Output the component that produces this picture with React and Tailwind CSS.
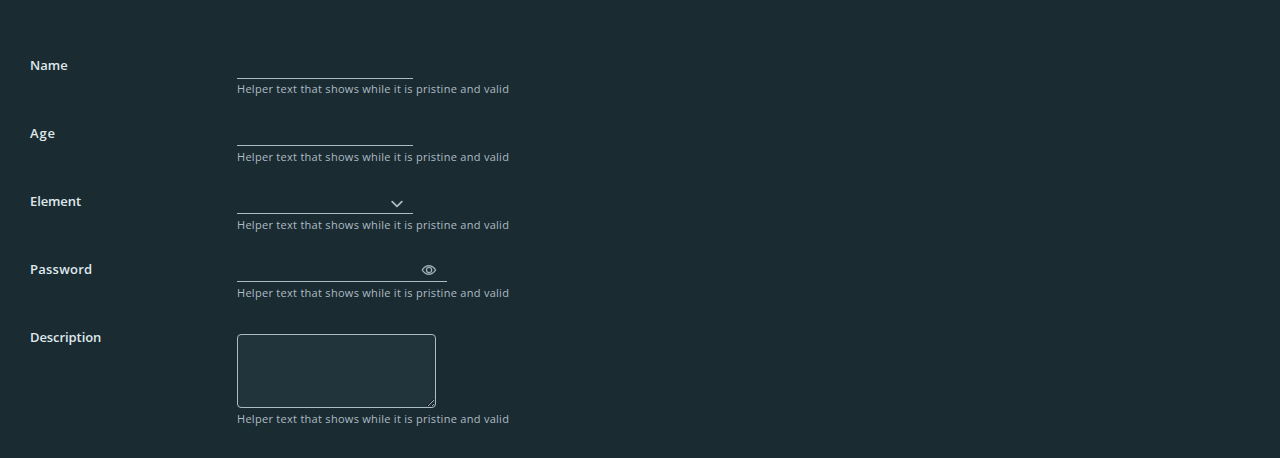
import React from "react";

const HELPER = "Helper text that shows while it is pristine and valid";

function Row({ label, id, height, line, helper, children, labelSpacing }) {
  return (
    <div className={`flex ${height}`}>
      <label
        htmlFor={id}
        className={`w-[207px] shrink-0 pt-[6px] text-[13px] leading-[18px] font-semibold text-[#dfe8ec] ${labelSpacing}`}
      >
        {label}
      </label>
      <div className="flex flex-col items-start">
        <div className={`flex ${line}`}>{children}</div>
        <span className={`whitespace-nowrap text-[11px] leading-4 tracking-[0.285px] text-[#adbbc4] ${helper}`}>
          {HELPER}
        </span>
      </div>
    </div>
  );
}

const field = "h-full min-w-0 flex-1 bg-transparent px-1.5 text-[13px] text-[#e9ecef] outline-none";

export default function App() {
  return (
    <form className="flex h-[458px] flex-col bg-[#1b2b32] pt-[50px] pl-[30px] font-['Open_Sans','Noto_Sans',sans-serif]">
      <Row label="Name" id="name" height="h-[68px]" line="h-[29px] w-[176px] border-b border-[#adbbc4]" helper="mt-[2px]" labelSpacing="tracking-[0px]">
        <input id="name" className={field} />
      </Row>
      <Row label="Age" id="age" height="h-[68px]" line="h-[28px] w-[176px] border-b border-[#adbbc4]" helper="mt-[3px]" labelSpacing="tracking-[0.9px]">
        <input id="age" className={field} />
      </Row>
      <Row label="Element" id="element" height="h-[68px]" line="h-[28px] w-[176px] border-b border-[#adbbc4]" helper="mt-[3px]" labelSpacing="tracking-[-0.1px]">
        <select id="element" className={`${field} appearance-none`}>
          <option></option>
        </select>
        <svg className="mt-[14px] mr-[10px] h-2 w-3 shrink-0" viewBox="0 0 12 8" fill="none" stroke="#adbbc4" strokeWidth="1.8" strokeLinecap="round" strokeLinejoin="round">
          <path d="M1.2 1.6 6 6.3l4.8-4.7" />
        </svg>
      </Row>
      <Row label="Password" id="password" height="h-[68px]" line="h-[28px] w-[210px] border-b border-[#adbbc4]" helper="mt-[3px]" labelSpacing="tracking-[0.25px]">
        <input id="password" type="password" className={field} />
        <svg className="mt-[8px] mr-[10px] size-4 shrink-0" viewBox="0 0 36 36" fill="#adbbc4" stroke="#adbbc4" strokeWidth="0.8">
          <path d="M33.62 17.53c-3.37-6.23-9.28-10-15.82-10S5.34 11.3 2 17.53l-.28.47.26.48c3.37 6.23 9.28 10 15.82 10s12.46-3.72 15.82-10l.26-.48Zm-15.82 8.9C12.17 26.43 7 23.29 4 18c3-5.29 8.17-8.43 13.8-8.43S28.54 12.72 31.59 18c-3.05 5.29-8.17 8.43-13.79 8.43Z" />
          <path d="M18.09 11.17A6.86 6.86 0 1 0 25 18a6.86 6.86 0 0 0-6.91-6.83Zm0 11.72A4.86 4.86 0 1 1 23 18a4.87 4.87 0 0 1-4.91 4.89Z" />
        </svg>
      </Row>
      <Row label="Description" id="description" height="h-[110px]" line="mt-3 h-[74px]" helper="mt-[3px]" labelSpacing="tracking-[-0.08px]">
        <textarea
          id="description"
          className="h-[74px] w-[199px] rounded-[4px] border border-[#adbbc4] bg-[#22343b] px-2 py-1.5 text-[13px] text-[#e9ecef] outline-none"
        />
      </Row>
    </form>
  );
}
